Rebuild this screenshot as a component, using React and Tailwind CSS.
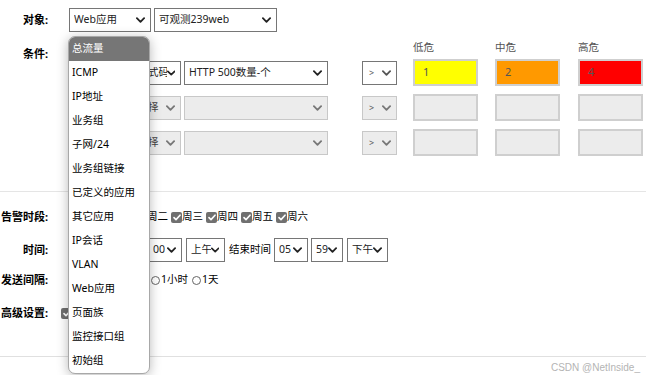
import React from 'react';

const Chevron = ({ className = 'text-[#222]' }) => (
  <svg className={className} width="9" height="6" viewBox="0 0 10 6" fill="none">
    <path d="M1 1l4 4 4-4" stroke="currentColor" strokeWidth="2" strokeLinecap="round" strokeLinejoin="round" />
  </svg>
);

function Select({ text, className = '', disabled = false, small = false }) {
  return (
    <div
      className={`h-[24px] flex items-center justify-between pl-[4px] pr-[5px] border ${
        disabled ? 'bg-[#ececec] border-[#c8c8c8] text-[#444]' : 'bg-white border-[#767676] text-[#222]'
      } ${className}`}
    >
      <span className={small ? 'text-[9px] pl-[2px] text-[#555]' : 'whitespace-nowrap overflow-hidden'}>{text}</span>
      <Chevron className={disabled ? 'text-[#777]' : small ? 'text-[#555]' : 'text-[#222]'} />
    </div>
  );
}

function Level({ value, bg }) {
  return (
    <div className={`w-[65px] h-[27px] border-2 border-[#cfcfcf] flex items-center pl-[8px] text-[11px] text-[#555] ${bg}`}>
      {value}
    </div>
  );
}

function CondRow({ first, second, active, levels }) {
  return (
    <div className="flex items-center h-[27px]">
      <Select text="应用" disabled={!active} className="w-[50px]" />
      <Select text={first} disabled={!active} className="w-[59px] ml-[3px]" />
      <Select text={second} disabled={!active} className="w-[144px] ml-[3px]" />
      <Select text=">" small disabled={!active} className="w-[35px] ml-[34px]" />
      <div className="flex ml-[16px]">
        <Level value={levels[0]} bg={active ? 'bg-[#ffff00]' : 'bg-[#ececec]'} />
        <div className="ml-[17px]">
          <Level value={levels[1]} bg={active ? 'bg-[#ff9900]' : 'bg-[#ececec]'} />
        </div>
        <div className="ml-[18px]">
          <Level value={levels[2]} bg={active ? 'bg-[#ff0000]' : 'bg-[#ececec]'} />
        </div>
      </div>
    </div>
  );
}

const Check = () => (
  <span className="w-[11px] h-[11px] rounded-[2px] bg-[#707070] flex items-center justify-center shrink-0">
    <svg width="8" height="7" viewBox="0 0 8 7" fill="none">
      <path d="M1 3.6l2 2L7 1.2" stroke="white" strokeWidth="1.6" strokeLinecap="round" strokeLinejoin="round" />
    </svg>
  </span>
);

const Radio = () => (
  <span className="w-[9px] h-[9px] rounded-full border border-[#666] bg-white shrink-0" />
);

const Label = ({ children }) => (
  <div className="w-[48px] text-right font-bold text-[11px] text-black whitespace-nowrap">{children}</div>
);

export default function App() {
  const days = ['周一', '周二', '周三', '周四', '周五', '周六'];
  const menu = [
    '总流量', 'ICMP', 'IP地址', '业务组', '子网/24', '业务组链接', '已定义的应用',
    '其它应用', 'IP会话', 'VLAN', 'Web应用', '页面族', '监控接口组', '初始组',
  ];

  return (
    <div className="relative w-[646px] h-[375px] overflow-hidden bg-white text-[10.5px] text-[#222] font-['Noto_Sans','Noto_Sans_CJK_SC',sans-serif]">
      <div className="pt-[8px]">
        {/* 对象 */}
        <div className="flex items-center h-[24px]">
          <Label>对象:</Label>
          <Select text="Web应用" className="w-[82px] ml-[21px]" />
          <Select text="可观测239web" className="w-[123px] ml-[3px]" />
        </div>

        {/* 条件 */}
        <div className="flex">
          <div className="pt-[14px]">
            <Label>条件:</Label>
          </div>
          <div className="ml-[21px] flex flex-col">
            <div className="h-[27px] flex items-end pb-[3px] text-[10.5px] text-[#555]">
              <span className="ml-[344px] w-[82px]">低危</span>
              <span className="w-[83px]">中危</span>
              <span>高危</span>
            </div>
            <div className="flex flex-col gap-[8px]">
              <CondRow first="响应式码" second="HTTP 500数量-个" active levels={['1', '2', '4']} />
              <CondRow first="请选择" second="" levels={['', '', '']} />
              <CondRow first="请选择" second="" levels={['', '', '']} />
            </div>
          </div>
        </div>

        <div className="mt-[35px] h-px bg-[#e5e5e5]" />

        {/* 告警时段 */}
        <div className="mt-[13px] flex items-center h-[24px]">
          <Label>告警时段:</Label>
          <div className="ml-[53px] flex items-center">
            {days.map((d) => (
              <span key={d} className="flex items-center w-[35px]">
                <Check />
                <span className="text-black">{d}</span>
              </span>
            ))}
          </div>
        </div>

        {/* 时间 */}
        <div className="mt-[9px] flex items-center h-[24px]">
          <Label>时间:</Label>
          <div className="ml-[22px] flex items-center text-black">
            <span className="w-[42px] text-[9.5px]">开始时间</span>
            <Select text="00" className="w-[32px] ml-[1px]" />
            <Select text="00" className="w-[34px] ml-[3px]" />
            <Select text="上午" className="w-[39px] ml-[4px]" />
            <span className="ml-[4px]">结束时间</span>
            <Select text="05" className="w-[34px] ml-[3px]" />
            <Select text="59" className="w-[32px] ml-[3px]" />
            <Select text="下午" className="w-[41px] ml-[4px]" />
          </div>
        </div>

        {/* 发送间隔 */}
        <div className="mt-[6px] flex items-center h-[24px]">
          <Label>发送间隔:</Label>
          <div className="ml-[22px] flex items-center text-black">
            <span className="flex items-center w-[40px]"><Radio /><span className="ml-[1px]">5分钟</span></span>
            <span className="flex items-center w-[41px]"><Radio /><span className="ml-[1px]">30分钟</span></span>
            <span className="flex items-center w-[41px]"><Radio /><span className="ml-[1px]">1小时</span></span>
            <span className="flex items-center"><Radio /><span className="ml-[1px]">1天</span></span>
          </div>
        </div>

        {/* 高级设置 */}
        <div className="mt-[9px] flex items-center h-[24px]">
          <Label>高级设置:</Label>
          <div className="ml-[13px] flex items-center gap-[2px] text-black">
            <Check />
            <span>启用</span>
          </div>
        </div>

        <div className="mt-[31px] h-px bg-[#e0e0e0]" />
        <div className="flex justify-end pr-[6px] mt-[3px] text-[10px] text-[#b4b4b4] font-['Liberation_Sans',sans-serif]">
          CSDN @NetInside_
        </div>
      </div>

      {/* open dropdown list */}
      <div className="absolute left-[68px] top-[36px] w-[82px] bg-white border border-[#a8a8a8] rounded-[7px] overflow-hidden shadow-[0_2px_12px_rgba(0,0,0,0.28)]">
        {menu.map((m, i) => (
          <div
            key={m}
            className={`h-[24px] flex items-center pl-[3px] whitespace-nowrap ${
              i === 0 ? 'bg-[#767676] text-white' : 'text-black'
            }`}
          >
            {m}
          </div>
        ))}
      </div>
    </div>
  );
}
